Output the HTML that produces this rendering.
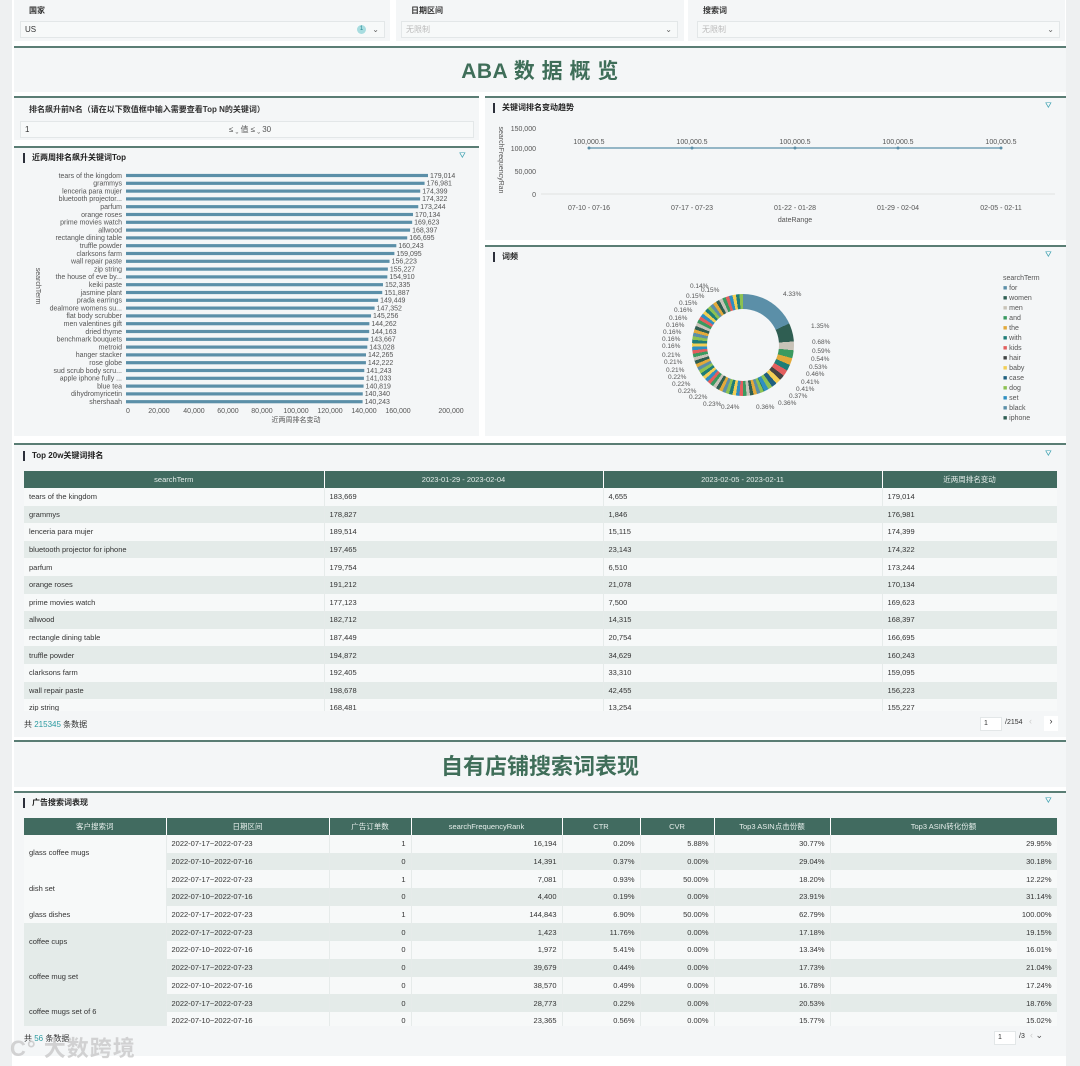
<!DOCTYPE html>
<html><head><meta charset="utf-8">
<style>
*{box-sizing:border-box;margin:0;padding:0}
body{width:1080px;height:1066px;overflow:hidden;background:#fff;font-family:"Liberation Sans","Noto Sans CJK SC",sans-serif;color:#333;position:relative}
.abs{position:absolute}
.panel{position:absolute;background:#f4f6f7;border-top:2px solid #5a7d74}
.np{position:absolute;background:#f4f6f7}
.lbl{position:absolute;font-size:8px;font-weight:bold;color:#333}
.inp{position:absolute;height:17px;background:#f7f9f9;border:1px solid #e3e7e8;font-size:8px;line-height:15px;padding-left:4px;color:#333}
.ttl{position:absolute;font-size:8px;font-weight:bold;color:#222;padding-left:7px;border-left:2px solid #2b2f3a;line-height:10px}
.fic{position:absolute;font-size:8px;color:#3aa0b0}
table{border-collapse:collapse;table-layout:fixed;font-size:7.5px}
th{background:#416b60;color:#e6eeeb;font-weight:normal;height:17px;border-right:1px solid #fff}
td{height:17.6px;padding:0 5px;white-space:nowrap;overflow:hidden}
.t1 tr:nth-child(even) td{background:#f7f9f9}
.t1 tr:nth-child(odd) td{background:#e4ebe9}
.t1 td{border-right:1px solid #e6ebea}
.t2 td{border-right:1px solid #e6ebea;height:17.7px}
.t2 tr.w td{background:#f7f9f9}
.t2 tr.g td{background:#e4ebe9}
.t2 td.cw{background:#f7f9f9!important}
.t2 td.cg{background:#e4ebe9!important}
.r{text-align:right}
.ax{font-size:7px;fill:#555;font-family:"Liberation Sans","Noto Sans CJK SC",sans-serif}
</style></head><body>
<div class="abs" style="left:0;top:0;width:12px;height:1066px;background:#eef0f1"></div>
<div class="abs" style="left:1066px;top:0;width:14px;height:1066px;background:#eef0f1"></div>

<div class="np" style="left:14px;top:0;width:376px;height:41px"></div>
<div class="lbl" style="left:29px;top:5px">国家</div>
<div class="inp" style="left:20px;top:21px;width:365px">US<span style="position:absolute;right:18px;top:3px;width:9px;height:9px;border-radius:50%;background:#a8dde0;color:#2a8a96;font-size:6px;line-height:9px;text-align:center">1</span><span style="position:absolute;right:5px;top:0;color:#666">⌄</span></div>
<div class="np" style="left:396px;top:0;width:288px;height:41px"></div>
<div class="lbl" style="left:411px;top:5px">日期区间</div>
<div class="inp" style="left:401px;top:21px;width:277px;color:#bbb">无限制<span style="position:absolute;right:5px;top:0;color:#666">⌄</span></div>
<div class="np" style="left:688px;top:0;width:377px;height:41px"></div>
<div class="lbl" style="left:703px;top:5px">搜索词</div>
<div class="inp" style="left:697px;top:21px;width:363px;color:#bbb">无限制<span style="position:absolute;right:5px;top:0;color:#666">⌄</span></div>

<div class="panel" style="left:14px;top:46px;width:1052px;height:46px"></div>
<div class="abs" style="left:0;width:1080px;top:55px;text-align:center;font-size:21px;font-weight:bold;color:#3f6e59;letter-spacing:0.5px">ABA 数 据 概 览</div>

<div class="panel" style="left:14px;top:96px;width:465px;height:44px"></div>
<div class="lbl" style="left:29px;top:104px">排名飙升前N名（请在以下数值框中输入需要查看Top N的关键词）</div>
<div class="inp" style="left:20px;top:121px;width:454px">1<span style="position:absolute;left:208px;top:0;color:#555">≤ ˬ 值 ≤ ˬ 30</span></div>

<div class="panel" style="left:14px;top:146px;width:465px;height:290px"></div>
<div class="ttl" style="left:23px;top:153px">近两周排名飙升关键词Top</div>
<div class="fic" style="left:459px;top:151px">⛛</div>
<svg class="abs" style="left:14px;top:146px" width="465" height="290">
<g id="bars"></g>
<text class="ax" x="22" y="140" transform="rotate(90 22 140)" text-anchor="middle">searchTerm</text>
<g class="ax" text-anchor="middle">
<text x="114" y="267">0</text><text x="145" y="267">20,000</text><text x="180" y="267">40,000</text><text x="214" y="267">60,000</text><text x="248" y="267">80,000</text><text x="282" y="267">100,000</text><text x="316" y="267">120,000</text><text x="350" y="267">140,000</text><text x="384" y="267">160,000</text><text x="437" y="267">200,000</text>
<text x="282" y="276">近两周排名变动</text>
</g>
</svg>

<div class="panel" style="left:485px;top:96px;width:581px;height:144px"></div>
<div class="ttl" style="left:493px;top:103px">关键词排名变动趋势</div>
<div class="fic" style="left:1045px;top:101px">⛛</div>
<svg class="abs" style="left:485px;top:96px" width="581" height="144">
<g class="ax" text-anchor="end"><text x="51" y="35">150,000</text><text x="51" y="55">100,000</text><text x="51" y="78">50,000</text><text x="51" y="101">0</text></g>
<text class="ax" x="14" y="64" transform="rotate(90 14 64)" text-anchor="middle">searchFrequencyRan</text>
<line x1="56" y1="98" x2="570" y2="98" stroke="#ccc" stroke-width="0.5"/>
<polyline points="104,52 207,52 310,52 413,52 516,52" fill="none" stroke="#5b8fa8" stroke-width="1.2"/>
<g fill="#5b8fa8"><circle cx="104" cy="52" r="1.5"/><circle cx="207" cy="52" r="1.5"/><circle cx="310" cy="52" r="1.5"/><circle cx="413" cy="52" r="1.5"/><circle cx="516" cy="52" r="1.5"/></g>
<g class="ax" text-anchor="middle"><text x="104" y="48">100,000.5</text><text x="207" y="48">100,000.5</text><text x="310" y="48">100,000.5</text><text x="413" y="48">100,000.5</text><text x="516" y="48">100,000.5</text>
<text x="104" y="114">07-10 - 07-16</text><text x="207" y="114">07-17 - 07-23</text><text x="310" y="114">01-22 - 01-28</text><text x="413" y="114">01-29 - 02-04</text><text x="516" y="114">02-05 - 02-11</text>
<text x="310" y="126">dateRange</text></g>
</svg>

<div class="panel" style="left:485px;top:245px;width:581px;height:191px"></div>
<div class="ttl" style="left:493px;top:252px">词频</div>
<div class="fic" style="left:1045px;top:250px">⛛</div>
<div class="abs" style="left:692px;top:294px;width:102px;height:102px;border-radius:50%;background:conic-gradient(#5b8fa8 0deg 65deg,#2f5e52 65deg 86deg,#c8c3b8 86deg 96deg,#3a9a60 96deg 105deg,#e2a93a 105deg 113deg,#1e7d78 113deg 120deg,#e35e5e 120deg 127deg,#444 127deg 133deg,#f2cf55 133deg 139deg,#1f5f7f 139deg 145deg,#8cc152 145deg 150deg,#2f8fc2 150deg 155deg,transparent 155deg),repeating-conic-gradient(#5b8fa8 0 4deg,#e2a93a 4deg 8deg,#2f5e52 8deg 12deg,#c8c3b8 12deg 16deg,#3a9a60 16deg 20deg,#e35e5e 20deg 24deg,#2f8fc2 24deg 28deg,#f2cf55 28deg 32deg,#1e7d78 32deg 36deg,#8cc152 36deg 40deg)"></div>
<div class="abs" style="left:707px;top:309px;width:72px;height:72px;border-radius:50%;background:#f4f6f7"></div>
<div class="abs" style="font-size:6.5px;color:#555;left:0;top:0;width:1080px;height:1066px;pointer-events:none">
<span class="abs" style="left:783px;top:291px">4.33%</span><span class="abs" style="left:811px;top:323px">1.35%</span>
<span class="abs" style="left:812px;top:339px">0.68%</span><span class="abs" style="left:812px;top:348px">0.59%</span><span class="abs" style="left:811px;top:356px">0.54%</span><span class="abs" style="left:809px;top:364px">0.53%</span><span class="abs" style="left:806px;top:371px">0.46%</span><span class="abs" style="left:801px;top:379px">0.41%</span><span class="abs" style="left:796px;top:386px">0.41%</span><span class="abs" style="left:789px;top:393px">0.37%</span><span class="abs" style="left:778px;top:400px">0.36%</span><span class="abs" style="left:756px;top:404px">0.36%</span><span class="abs" style="left:721px;top:404px">0.24%</span><span class="abs" style="left:703px;top:401px">0.23%</span>
<span class="abs" style="left:690px;top:283px">0.14%</span><span class="abs" style="left:701px;top:287px">0.15%</span><span class="abs" style="left:686px;top:293px">0.15%</span><span class="abs" style="left:679px;top:300px">0.15%</span><span class="abs" style="left:674px;top:307px">0.16%</span><span class="abs" style="left:669px;top:315px">0.16%</span><span class="abs" style="left:666px;top:322px">0.16%</span><span class="abs" style="left:663px;top:329px">0.16%</span><span class="abs" style="left:662px;top:336px">0.16%</span><span class="abs" style="left:662px;top:343px">0.16%</span>
<span class="abs" style="left:662px;top:352px">0.21%</span><span class="abs" style="left:664px;top:359px">0.21%</span><span class="abs" style="left:666px;top:367px">0.21%</span><span class="abs" style="left:668px;top:374px">0.22%</span><span class="abs" style="left:672px;top:381px">0.22%</span><span class="abs" style="left:678px;top:388px">0.22%</span><span class="abs" style="left:689px;top:394px">0.22%</span>
</div>
<div class="abs" style="left:1003px;top:274px;font-size:7px;color:#555;line-height:10px">
searchTerm<br>
<span style="color:#5b8fa8">■</span> for<br><span style="color:#2f5e52">■</span> women<br><span style="color:#c8c3b8">■</span> men<br><span style="color:#3a9a60">■</span> and<br><span style="color:#e2a93a">■</span> the<br><span style="color:#1e7d78">■</span> with<br><span style="color:#e35e5e">■</span> kids<br><span style="color:#444">■</span> hair<br><span style="color:#f2cf55">■</span> baby<br><span style="color:#1f5f7f">■</span> case<br><span style="color:#8cc152">■</span> dog<br><span style="color:#2f8fc2">■</span> set<br><span style="color:#5b8fa8">■</span> black<br><span style="color:#2f5e52">■</span> iphone
</div>

<div class="panel" style="left:14px;top:443px;width:1052px;height:294px"></div>
<div class="ttl" style="left:23px;top:451px">Top 20w关键词排名</div>
<div class="fic" style="left:1045px;top:449px">⛛</div>
<div class="abs" style="left:24px;top:471px;width:1033px;height:240px;overflow:hidden">
<table class="t1" style="width:1033px">
<colgroup><col style="width:300px"><col style="width:279px"><col style="width:279px"><col style="width:175px"></colgroup>
<tr><th>searchTerm</th><th>2023-01-29 - 2023-02-04</th><th>2023-02-05 - 2023-02-11</th><th>近两周排名变动</th></tr>
<tr><td>tears of the kingdom</td><td>183,669</td><td>4,655</td><td>179,014</td></tr>
<tr><td>grammys</td><td>178,827</td><td>1,846</td><td>176,981</td></tr>
<tr><td>lenceria para mujer</td><td>189,514</td><td>15,115</td><td>174,399</td></tr>
<tr><td>bluetooth projector for iphone</td><td>197,465</td><td>23,143</td><td>174,322</td></tr>
<tr><td>parfum</td><td>179,754</td><td>6,510</td><td>173,244</td></tr>
<tr><td>orange roses</td><td>191,212</td><td>21,078</td><td>170,134</td></tr>
<tr><td>prime movies watch</td><td>177,123</td><td>7,500</td><td>169,623</td></tr>
<tr><td>allwood</td><td>182,712</td><td>14,315</td><td>168,397</td></tr>
<tr><td>rectangle dining table</td><td>187,449</td><td>20,754</td><td>166,695</td></tr>
<tr><td>truffle powder</td><td>194,872</td><td>34,629</td><td>160,243</td></tr>
<tr><td>clarksons farm</td><td>192,405</td><td>33,310</td><td>159,095</td></tr>
<tr><td>wall repair paste</td><td>198,678</td><td>42,455</td><td>156,223</td></tr>
<tr><td>zip string</td><td>168,481</td><td>13,254</td><td>155,227</td></tr>
</table></div>
<div class="abs" style="left:24px;top:719px;font-size:8px">共 <span style="color:#2a9aa0">215345</span> 条数据</div>
<div class="abs" style="left:980px;top:717px;width:22px;height:14px;background:#fff;border:1px solid #e3e7e8;font-size:7px;line-height:12px;padding-left:3px">1</div>
<div class="abs" style="left:1005px;top:719px;font-size:7px">/2154</div>
<div class="abs" style="left:1029px;top:716px;font-size:9px;color:#ccc">‹</div>
<div class="abs" style="left:1044px;top:716px;width:14px;height:15px;background:#fff;font-size:9px;text-align:center">›</div>

<div class="panel" style="left:14px;top:740px;width:1052px;height:47px"></div>
<div class="abs" style="left:0;width:1080px;top:749px;text-align:center;font-size:22px;font-weight:bold;color:#3f6e59">自有店铺搜索词表现</div>

<div class="panel" style="left:14px;top:791px;width:1052px;height:265px"></div>
<div class="ttl" style="left:23px;top:798px">广告搜索词表现</div>
<div class="fic" style="left:1045px;top:796px">⛛</div>
<div class="abs" style="left:24px;top:818px;width:1033px;height:208px;overflow:hidden">
<table class="t2" style="width:1033px">
<colgroup><col style="width:142px"><col style="width:163px"><col style="width:82px"><col style="width:151px"><col style="width:78px"><col style="width:74px"><col style="width:116px"><col style="width:227px"></colgroup>
<tr><th>客户搜索词</th><th>日期区间</th><th>广告订单数</th><th>searchFrequencyRank</th><th>CTR</th><th>CVR</th><th>Top3 ASIN点击份额</th><th>Top3 ASIN转化份额</th></tr>
<tr class="w"><td rowspan="2" class="cw">glass coffee mugs</td><td>2022-07-17~2022-07-23</td><td class="r">1</td><td class="r">16,194</td><td class="r">0.20%</td><td class="r">5.88%</td><td class="r">30.77%</td><td class="r">29.95%</td></tr>
<tr class="g"><td>2022-07-10~2022-07-16</td><td class="r">0</td><td class="r">14,391</td><td class="r">0.37%</td><td class="r">0.00%</td><td class="r">29.04%</td><td class="r">30.18%</td></tr>
<tr class="w"><td rowspan="2" class="cw">dish set</td><td>2022-07-17~2022-07-23</td><td class="r">1</td><td class="r">7,081</td><td class="r">0.93%</td><td class="r">50.00%</td><td class="r">18.20%</td><td class="r">12.22%</td></tr>
<tr class="g"><td>2022-07-10~2022-07-16</td><td class="r">0</td><td class="r">4,400</td><td class="r">0.19%</td><td class="r">0.00%</td><td class="r">23.91%</td><td class="r">31.14%</td></tr>
<tr class="w"><td class="cw">glass dishes</td><td>2022-07-17~2022-07-23</td><td class="r">1</td><td class="r">144,843</td><td class="r">6.90%</td><td class="r">50.00%</td><td class="r">62.79%</td><td class="r">100.00%</td></tr>
<tr class="g"><td rowspan="2" class="cg">coffee cups</td><td>2022-07-17~2022-07-23</td><td class="r">0</td><td class="r">1,423</td><td class="r">11.76%</td><td class="r">0.00%</td><td class="r">17.18%</td><td class="r">19.15%</td></tr>
<tr class="w"><td>2022-07-10~2022-07-16</td><td class="r">0</td><td class="r">1,972</td><td class="r">5.41%</td><td class="r">0.00%</td><td class="r">13.34%</td><td class="r">16.01%</td></tr>
<tr class="g"><td rowspan="2" class="cg">coffee mug set</td><td>2022-07-17~2022-07-23</td><td class="r">0</td><td class="r">39,679</td><td class="r">0.44%</td><td class="r">0.00%</td><td class="r">17.73%</td><td class="r">21.04%</td></tr>
<tr class="w"><td>2022-07-10~2022-07-16</td><td class="r">0</td><td class="r">38,570</td><td class="r">0.49%</td><td class="r">0.00%</td><td class="r">16.78%</td><td class="r">17.24%</td></tr>
<tr class="g"><td rowspan="2" class="cg">coffee mugs set of 6</td><td>2022-07-17~2022-07-23</td><td class="r">0</td><td class="r">28,773</td><td class="r">0.22%</td><td class="r">0.00%</td><td class="r">20.53%</td><td class="r">18.76%</td></tr>
<tr class="w"><td>2022-07-10~2022-07-16</td><td class="r">0</td><td class="r">23,365</td><td class="r">0.56%</td><td class="r">0.00%</td><td class="r">15.77%</td><td class="r">15.02%</td></tr>
</table></div>
<div class="abs" style="left:24px;top:1033px;font-size:8px">共 <span style="color:#2a9aa0">56</span> 条数据</div>
<div class="abs" style="left:994px;top:1031px;width:22px;height:14px;background:#fff;border:1px solid #e3e7e8;font-size:7px;line-height:12px;padding-left:3px">1</div>
<div class="abs" style="left:1019px;top:1033px;font-size:7px">/3</div>
<div class="abs" style="left:1030px;top:1030px;font-size:9px;color:#ccc">‹ <span style="color:#555">⌄</span></div>
<div class="abs" style="left:10px;top:1031px;font-size:22px;font-weight:bold;color:rgba(200,200,200,0.8);letter-spacing:1px">C° 大数跨境</div>

<script>
var d=[["tears of the kingdom",179014],["grammys",176981],["lenceria para mujer",174399],["bluetooth projector...",174322],["parfum",173244],["orange roses",170134],["prime movies watch",169623],["allwood",168397],["rectangle dining table",166695],["truffle powder",160243],["clarksons farm",159095],["wall repair paste",156223],["zip string",155227],["the house of eve by...",154910],["keiki paste",152335],["jasmine plant",151887],["prada earrings",149449],["dealmore womens su...",147352],["flat body scrubber",145256],["men valentines gift",144262],["dried thyme",144163],["benchmark bouquets",143667],["metroid",143028],["hanger stacker",142265],["rose globe",142222],["sud scrub body scru...",141243],["apple iphone fully ...",141033],["blue tea",140819],["dihydromyricetin",140340],["shershaah",140243]];
var s="";
for(var i=0;i<d.length;i++){var y=29.5+i*7.8;var w=d[i][1]*0.001687;
s+='<text class="ax" x="108" y="'+(y+2.3)+'" text-anchor="end">'+d[i][0]+'</text>';
s+='<rect x="112" y="'+(y-1.6)+'" width="'+w+'" height="3.2" fill="#5b8fa8"/>';
s+='<text class="ax" x="'+(114+w)+'" y="'+(y+2.3)+'">'+d[i][1].toLocaleString("en-US")+'</text>';}
document.getElementById("bars").innerHTML=s;
</script>
</body></html>
